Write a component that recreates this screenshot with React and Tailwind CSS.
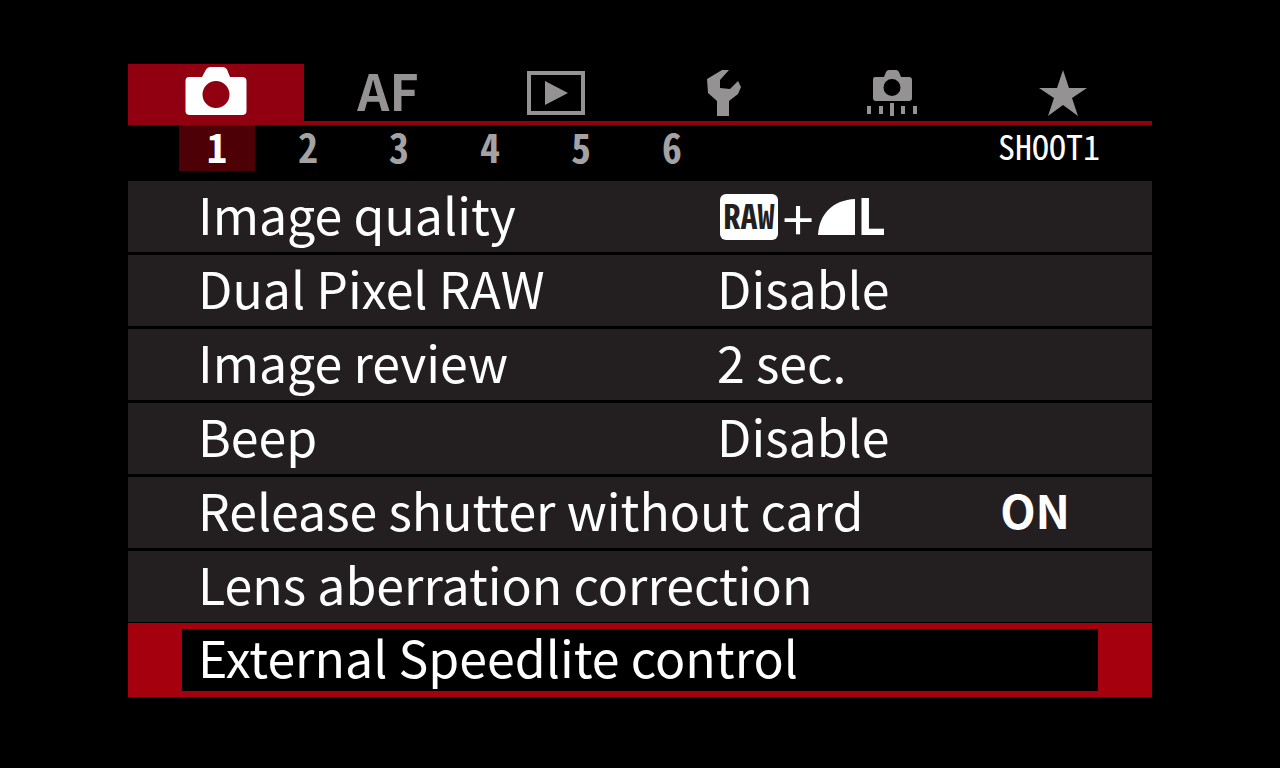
import React, { useState } from 'react';

const CameraIcon = () => (
  <svg viewBox="0 0 62 54" className="w-[62px] h-[54px]" fill="currentColor" aria-hidden="true">
    <path
      fillRule="evenodd"
      d="M4 11H17L21 3.500Q22.500 1 25 1H38Q40.500 1 42 3.500L45 11H57Q61.500 11 61.500 15V45Q61.500 49 57 49H5Q.5 49 .5 45V15Q.5 11 4 11ZM31 15A13.500 13.500 0 1 0 31 42A13.500 13.500 0 1 0 31 15Z"
    />
  </svg>
);

const PlayIcon = () => (
  <svg viewBox="0 0 58 44" className="w-[58px] h-[44px]" aria-hidden="true">
    <rect x="2" y="2" width="54" height="40" fill="none" stroke="currentColor" strokeWidth="4" />
    <path d="M18 10V34L41 22Z" fill="currentColor" />
  </svg>
);

const WrenchIcon = () => (
  <svg viewBox="0 0 36 48" className="w-[36px] h-[48px]" fill="currentColor" aria-hidden="true">
    <path d="M16 1L23 1L14 11V19L24 20L32 12L35 18L32 25L23 32V47H11V32L2 24L1 10Z" />
  </svg>
);

const CustomIcon = () => (
  <svg viewBox="0 0 50 48" className="w-[50px] h-[48px]" fill="currentColor" aria-hidden="true">
    <path
      fillRule="evenodd"
      d="M8 8H17L19 3Q20 1 22 1H29Q31 1 32 3L34 8H42Q45 8 45 11V29Q45 32 42 32H9Q6 32 6 29V11Q6 8 8 8ZM25 10A8.500 8.500 0 1 0 25 27A8.500 8.500 0 1 0 25 10Z"
    />
    <path d="M0 37H4V45H0ZM12 37H16V45H12ZM23 34H27V47H23ZM34 37H38V45H34ZM46 37H50V45H46Z" />
  </svg>
);

const StarIcon = () => (
  <svg viewBox="-6 0 54 46" className="w-[54px] h-[46px]" fill="currentColor" aria-hidden="true">
    <path d="M24 0L30 18H48L33 28L39 46L24 35L9 46L15 28L0 18H18Z" />
  </svg>
);

const tabs = [
  { id: 'shoot', label: 'Shooting', icon: <CameraIcon /> },
  { id: 'af', label: 'AF', icon: <span className="pb-2">AF</span> },
  { id: 'play', label: 'Playback', icon: <PlayIcon /> },
  { id: 'setup', label: 'Set-up', icon: <WrenchIcon /> },
  { id: 'custom', label: 'Custom functions', icon: <CustomIcon /> },
  { id: 'my', label: 'My menu', icon: <StarIcon /> },
];

const pages = [1, 2, 3, 4, 5, 6];

const Quality = () => (
  <span className="flex items-center pl-[3px]">
    <span className="flex items-center justify-center w-[58px] h-[46px] pb-1 rounded-md bg-white text-[#231f20] text-[34px] leading-none font-bold font-['Noto_Sans_Mono_CJK_JP',monospace]">
      RAW
    </span>
    <span className="w-10 text-center text-[56px] leading-[46px]">+</span>
    <svg viewBox="0 0 37 36" className="w-[37px] h-[36px]" fill="currentColor" aria-hidden="true">
      <path d="M0 36C1 15 15 1 37 0V36Z" />
    </svg>
    <span className="pb-2 pl-0.5 font-bold leading-[46px]">L</span>
  </span>
);

const items = [
  { label: 'Image quality', value: <Quality /> },
  { label: 'Dual Pixel RAW', value: 'Disable' },
  { label: 'Image review', value: '2 sec.' },
  { label: 'Beep', value: 'Disable' },
  { label: 'Release shutter without card', flag: 'ON' },
  { label: 'Lens aberration correction' },
  { label: 'External Speedlite control' },
];

const MenuRow = ({ item, selected, onSelect }) => (
  <li>
    <button
      onClick={onSelect}
      className={`flex items-center w-full text-left whitespace-nowrap ${
        selected
          ? 'h-[74px] -mt-0.5 border-y-6 border-x-54 border-[#a5000e] bg-black pl-4 pr-7'
          : 'h-[71px] bg-[#231f20] pl-[70px] pr-[82px]'
      }`}
    >
      <span className={item.value ? 'w-[519px] pb-2' : 'flex-1 pb-2'}>{item.label}</span>
      {typeof item.value === 'string' ? <span className="pb-2">{item.value}</span> : item.value}
      {item.flag && <span className="pb-2 text-[46px] font-bold">{item.flag}</span>}
    </button>
  </li>
);

export default function App() {
  const [tab, setTab] = useState('shoot');
  const [page, setPage] = useState(1);
  const [selected, setSelected] = useState(6);

  return (
    <div className="min-h-screen bg-black text-white pt-16 font-['Noto_Sans_CJK_JP','Noto_Sans',sans-serif]">
      <main className="w-4/5 mx-auto">
        <nav className="flex h-[61px] pr-2 border-b-4 border-[#900010]">
          {tabs.map((t) => (
            <button
              key={t.id}
              onClick={() => setTab(t.id)}
              aria-label={t.label}
              className={`flex items-center justify-center text-[50px] leading-none font-bold ${
                t.id === 'shoot' ? 'w-44' : 'flex-1'
              } ${t.id === tab ? 'bg-[#900010] text-white' : 'text-[#959293]'}`}
            >
              {t.icon}
            </button>
          ))}
        </nav>

        <div className="flex items-start h-14 pl-[51px] pr-[52px] font-['Noto_Sans_Mono_CJK_JP',monospace]">
          <div className="flex gap-[15px]">
            {pages.map((p) => (
              <button
                key={p}
                onClick={() => setPage(p)}
                className={`w-[76px] h-[46px] pb-1 text-[40px] leading-[42px] font-bold ${
                  p === page ? 'bg-[#4d0006] text-white' : 'text-[#a5a2a3]'
                }`}
              >
                {p}
              </button>
            ))}
          </div>
          <span className="ml-auto text-[34px] leading-[42px]">SHOOT1</span>
        </div>

        <ul className="flex flex-col gap-[3px] text-[50px] leading-none">
          {items.map((item, i) => (
            <MenuRow key={item.label} item={item} selected={i === selected} onSelect={() => setSelected(i)} />
          ))}
        </ul>
      </main>
    </div>
  );
}
